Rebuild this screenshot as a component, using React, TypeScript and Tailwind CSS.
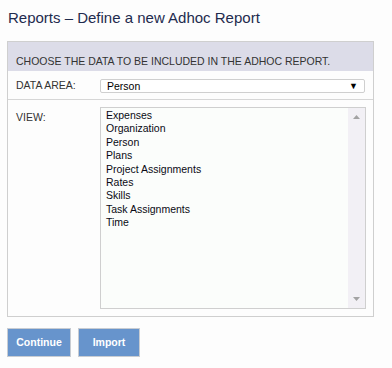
import React from 'react';

const views = [
  'Expenses',
  'Organization',
  'Person',
  'Plans',
  'Project Assignments',
  'Rates',
  'Skills',
  'Task Assignments',
  'Time',
];

const App: React.FC = () => {
  return (
    <div
      className="w-[392px] h-[368px] bg-[#fdfdfd] overflow-hidden"
      style={{ fontFamily: '"Liberation Sans", Arial, sans-serif' }}
    >
      <h1 className="pl-[8px] pt-[9px] text-[15px] leading-[18px] text-[#1f2b4e]">
        Reports – Define a new Adhoc Report
      </h1>

      <div className="ml-[7px] mt-[14px] w-[367px] border border-[#cfcfcf] bg-[#fdfdfd]">
        {/* header band */}
        <div className="h-[29px] bg-[#dcdce8] pl-[8px] pt-[13px] text-[10.5px] leading-[13px] text-[#333]">
          CHOOSE THE DATA TO BE INCLUDED IN THE ADHOC REPORT.
        </div>

        {/* data area row */}
        <div className="flex h-[29px] items-start border-b border-[#d6d6d6] pt-[8px]">
          <div className="w-[92px] pl-[8px] text-[10.5px] leading-[13px] text-[#333]">DATA AREA:</div>
          <div className="flex h-[14px] w-[265px] items-center justify-between rounded-[2px] border border-[#cfcfcf] bg-white pl-[6px] pr-[6px] text-[10.5px] text-black">
            <span className="leading-[12px]">Person</span>
            <span className="text-[9px] leading-[10px]">▼</span>
          </div>
        </div>

        {/* view row */}
        <div className="flex pt-[7px] pb-[7px]">
          <div className="w-[92px] pl-[8px] pt-[4px] text-[10.5px] leading-[13px] text-[#333]">VIEW:</div>
          <div className="flex h-[202px] w-[266px] border border-[#cfcfcf] bg-[#fbfdfb]">
            <div className="flex-1 pl-[5px] pt-[1px] text-[10.5px] leading-[13.4px] text-[#0a0a14]">
              {views.map((v) => (
                <div key={v}>{v}</div>
              ))}
            </div>
            <div className="flex w-[17px] flex-col items-center justify-between bg-[#f2f0f5] py-[7px]">
              <svg width="7" height="4" viewBox="0 0 7 4">
                <polygon points="3.5,0 7,4 0,4" fill="#a3a3a3" />
              </svg>
              <svg width="7" height="4" viewBox="0 0 7 4">
                <polygon points="0,0 7,0 3.5,4" fill="#a3a3a3" />
              </svg>
            </div>
          </div>
        </div>
      </div>

      <div className="ml-[7px] mt-[11px] flex gap-[7px]">
        <button className="h-[29px] w-[64px] border border-[#c8ccd2] bg-[#6794cc] text-[10.5px] font-bold text-white">
          Continue
        </button>
        <button className="h-[29px] w-[62px] border border-[#c8ccd2] bg-[#6794cc] text-[10.5px] font-bold text-white">
          Import
        </button>
      </div>
    </div>
  );
};

export default App;
